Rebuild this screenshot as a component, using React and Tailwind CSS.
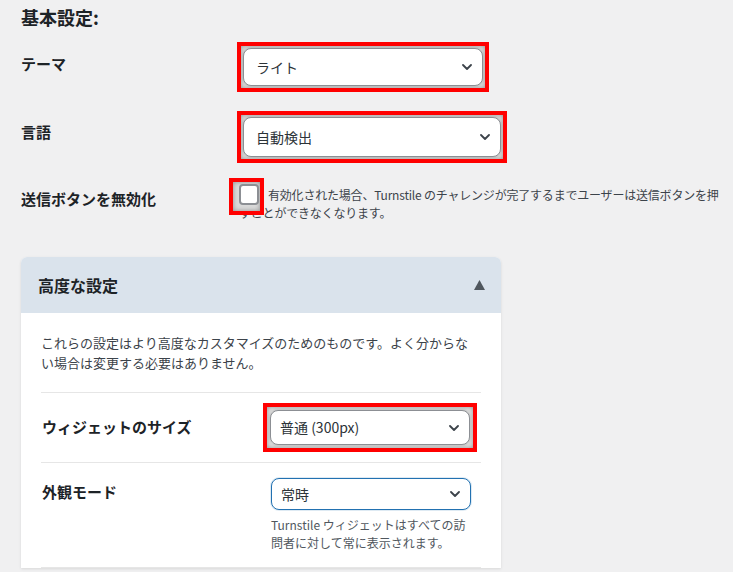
import React from 'react';

const Chevron = () => (
  <svg width="10" height="6" viewBox="0 0 10 6" className="shrink-0">
    <polyline points="1,1 5,5 9,1" fill="none" stroke="#3c434a" strokeWidth="1.8" strokeLinecap="round" strokeLinejoin="round" />
  </svg>
);

const Select = ({ value, className = '', pl = 'pl-[12px]' }) => (
  <div className={`flex items-center justify-between rounded-[8px] border border-[#8c8f94] bg-white ${pl} pr-[10px] text-[14px] text-[#2c3338] shadow-[0_0_3px_rgba(0,0,0,0.2)] ${className}`}>
    <span>{value}</span>
    <Chevron />
  </div>
);

// red annotation frame round a control
const Mark = ({ children, className = '' }) => (
  <div className={`border-4 border-[#ff0000] bg-[#e2e2e2] shadow-[inset_0_0_5px_rgba(0,0,0,0.35)] ${className}`}>
    {children}
  </div>
);

const App = () => {
  return (
    <div
      className="min-h-screen bg-[#f0f0f1] pl-[21px] pt-[5px] text-[#1d2327]"
      style={{ fontFamily: '"Noto Sans CJK JP", "Noto Sans", sans-serif' }}
    >
      <h2 className="text-[18px] font-bold leading-[24px]">基本設定:</h2>

      {/* テーマ */}
      <div className="mt-[13px] flex items-start">
        <div className="mt-[10px] w-[216px] text-[15px] font-bold leading-[24px]">テーマ</div>
        <Mark className="p-[2px]">
          <Select value="ライト" className="h-[38px] w-[240px]" />
        </Mark>
      </div>

      {/* 言語 */}
      <div className="mt-[19px] flex items-start">
        <div className="mt-[9px] w-[216px] text-[15px] font-bold leading-[24px]">言語</div>
        <Mark className="p-[2px]">
          <Select value="自動検出" className="h-[40px] w-[258px]" />
        </Mark>
      </div>

      {/* 送信ボタンを無効化 */}
      <div className="mt-[23px] flex items-start">
        <div className="mt-[1px] w-[218px] text-[15px] font-bold leading-[24px]">送信ボタンを無効化</div>
        <div className="relative whitespace-nowrap text-[12px] leading-[18px] tracking-[-0.2px] text-[#3c434a]">
          <span className="inline-block w-[29px]" />
          有効化された場合、Turnstile のチャレンジが完了するまでユーザーは送信ボタンを押
          <br />
          すことができなくなります。
          <div className="absolute left-[-10px] top-[-8px] z-10 h-[37px] w-[35px] border-4 border-[#ff0000] bg-[#dadada] shadow-[inset_0_0_5px_rgba(0,0,0,0.35)]">
            <div className="ml-[6px] mt-[2px] h-[21px] w-[20px] rounded-[4px] border-2 border-[#8c8f94] bg-white" />
          </div>
        </div>
      </div>

      {/* 高度な設定 */}
      <div className="mt-[35px] w-[480px] overflow-hidden rounded-t-[6px] bg-white shadow-[0_1px_3px_rgba(0,0,0,0.1)]">
        <div className="flex h-[56px] items-center justify-between bg-[#dae3ec] pl-[17px] pr-[16px]">
          <span className="text-[16px] font-bold leading-[24px]">高度な設定</span>
          <svg width="11" height="10" viewBox="0 0 11 10">
            <polygon points="5.5,0 11,10 0,10" fill="#50575e" />
          </svg>
        </div>

        <div className="px-[20px] pt-[20px]">
          <p className="border-b border-[#e6e6e6] pb-[19px] text-[13px] leading-[20px] text-[#3c434a]">
            これらの設定はより高度なカスタマイズのためのものです。よく分からな
            <br />
            い場合は変更する必要はありません。
          </p>

          {/* ウィジェットのサイズ */}
          <div className="flex items-start border-b border-[#e6e6e6] py-[10px]">
            <div className="mt-[12px] w-[230px] pl-[1px] text-[15px] font-bold leading-[24px]">ウィジェットのサイズ</div>
            <Mark className="-ml-[8px] p-[3px]">
              <Select value="普通 (300px)" pl="pl-[9px]" className="h-[35px] w-[200px]" />
            </Mark>
          </div>

          {/* 外観モード */}
          <div className="flex items-start border-b border-[#e6e6e6] pb-[15px] pt-[15px]">
            <div className="mt-[2px] w-[230px] pl-[1px] text-[15px] font-bold leading-[24px]">外観モード</div>
            <div>
              <div className="flex h-[32px] w-[200px] items-center justify-between rounded-[8px] border border-[#2271b1] bg-white pl-[9px] pr-[10px] text-[14px] text-[#2c3338] shadow-[0_0_0_1px_rgba(34,113,177,0.15)]">
                <span>常時</span>
                <Chevron />
              </div>
              <p className="mt-[6px] whitespace-nowrap text-[12px] leading-[18px] text-[#50575e]">
                Turnstile ウィジェットはすべての訪
                <br />
                問者に対して常に表示されます。
              </p>
            </div>
          </div>
        </div>
      </div>
    </div>
  );
};

export default App;
